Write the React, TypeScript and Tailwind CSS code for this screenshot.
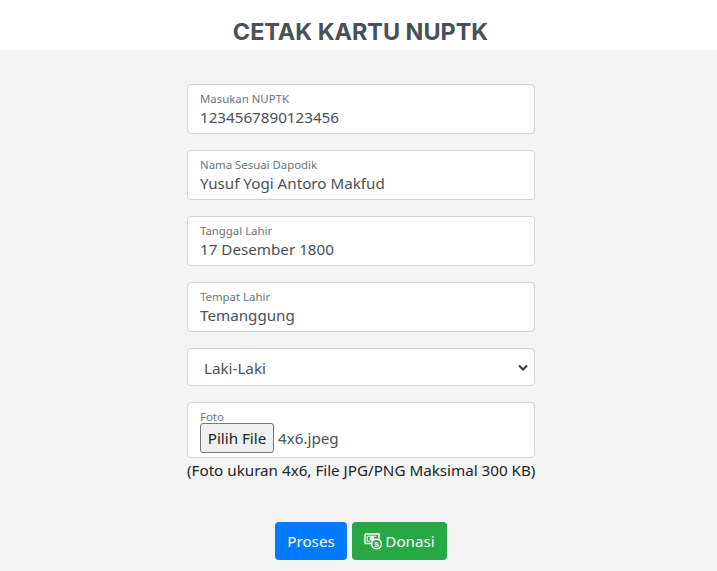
const FONT = "font-['Noto_Sans','Open_Sans',sans-serif]";

function Field({ label, value }: { label: string; value: string }) {
  return (
    <div className="h-[50px] w-[348px] rounded-[4px] border border-[#ced4da] bg-white pl-3 pt-[6px]">
      <div className="h-[14px] text-[11.4px] leading-[16px] text-[#6c757d]">{label}</div>
      <div className="h-[24px] text-[15.2px] leading-[24px] text-[#495057]">{value}</div>
    </div>
  );
}

function MoneyIcon() {
  return (
    <svg width="18" height="18" viewBox="0 0 18 18" fill="none" stroke="white" strokeWidth="1.4">
      <path d="M1 2 H15 V7" />
      <path d="M1 2 V11.5 H7.5" />
      <path d="M3.5 4.2 H12.5 M3.2 4.2 V9.2 H6" strokeWidth="1" />
      <circle cx="8" cy="6.5" r="2.4" fill="white" stroke="none" />
      <circle cx="12.5" cy="12" r="4.8" />
      <text x="12.5" y="14.8" textAnchor="middle" fontSize="8" fontWeight="700" fill="white" stroke="none" fontFamily="Liberation Sans, sans-serif">$</text>
    </svg>
  );
}

export default function App() {
  return (
    <div className={`${FONT} flex h-[571px] w-[717px] flex-col items-center overflow-hidden bg-[#f4f4f4]`}>
      <header className="flex h-[50px] w-full items-start justify-center bg-white pl-[4px] pt-[16px]">
        <h1 className="font-['Inter',sans-serif] text-[23.4px] font-bold leading-[32px] text-[#495057]">CETAK KARTU NUPTK</h1>
      </header>
      <main className="ml-[5px] mt-[34px] flex w-[348px] flex-col gap-4">
        <Field label="Masukan NUPTK" value="1234567890123456" />
        <Field label="Nama Sesuai Dapodik" value="Yusuf Yogi Antoro Makfud" />
        <Field label="Tanggal Lahir" value="17 Desember 1800" />
        <Field label="Tempat Lahir" value="Temanggung" />
        <div className="flex h-[38px] items-center justify-between rounded-[4px] border border-[#ced4da] bg-white pl-4 pr-[6px] pt-[2px] text-[15.2px] text-[#495057]">
          <span>Laki-Laki</span>
          <svg width="10" height="8" viewBox="0 0 10 8" fill="none" stroke="#343a40" strokeWidth="2"><path d="M1 1.5 L5 5.5 L9 1.5" /></svg>
        </div>
        <div>
          <div className="h-[56px] rounded-[4px] border border-[#ced4da] bg-white pl-3 pt-[6px]">
            <div className="h-[14px] text-[11.4px] leading-[16px] text-[#6c757d]">Foto</div>
            <div className="flex items-center">
              <div className="flex h-[30px] w-[74px] items-center justify-center rounded-[3px] border border-[#767676] bg-[#efefef] text-[15.2px] text-[#212529]">Pilih File</div>
              <span className="ml-1 text-[15.2px] text-[#495057]">4x6.jpeg</span>
            </div>
          </div>
          <p className="whitespace-nowrap text-center text-[15.2px] leading-[24px] text-[#212529]">(Foto ukuran 4x6, File JPG/PNG Maksimal 300 KB)</p>
        </div>
        <div className="mt-[24px] flex justify-center gap-[5px] text-[15.2px] text-white">
          <div className="flex h-[38px] w-[72px] items-center justify-center rounded-[4px] bg-[#007bff]">Proses</div>
          <div className="flex h-[38px] w-[95px] items-center justify-center gap-[3px] rounded-[4px] bg-[#28a745]"><MoneyIcon />Donasi</div>
        </div>
      </main>
    </div>
  );
}
